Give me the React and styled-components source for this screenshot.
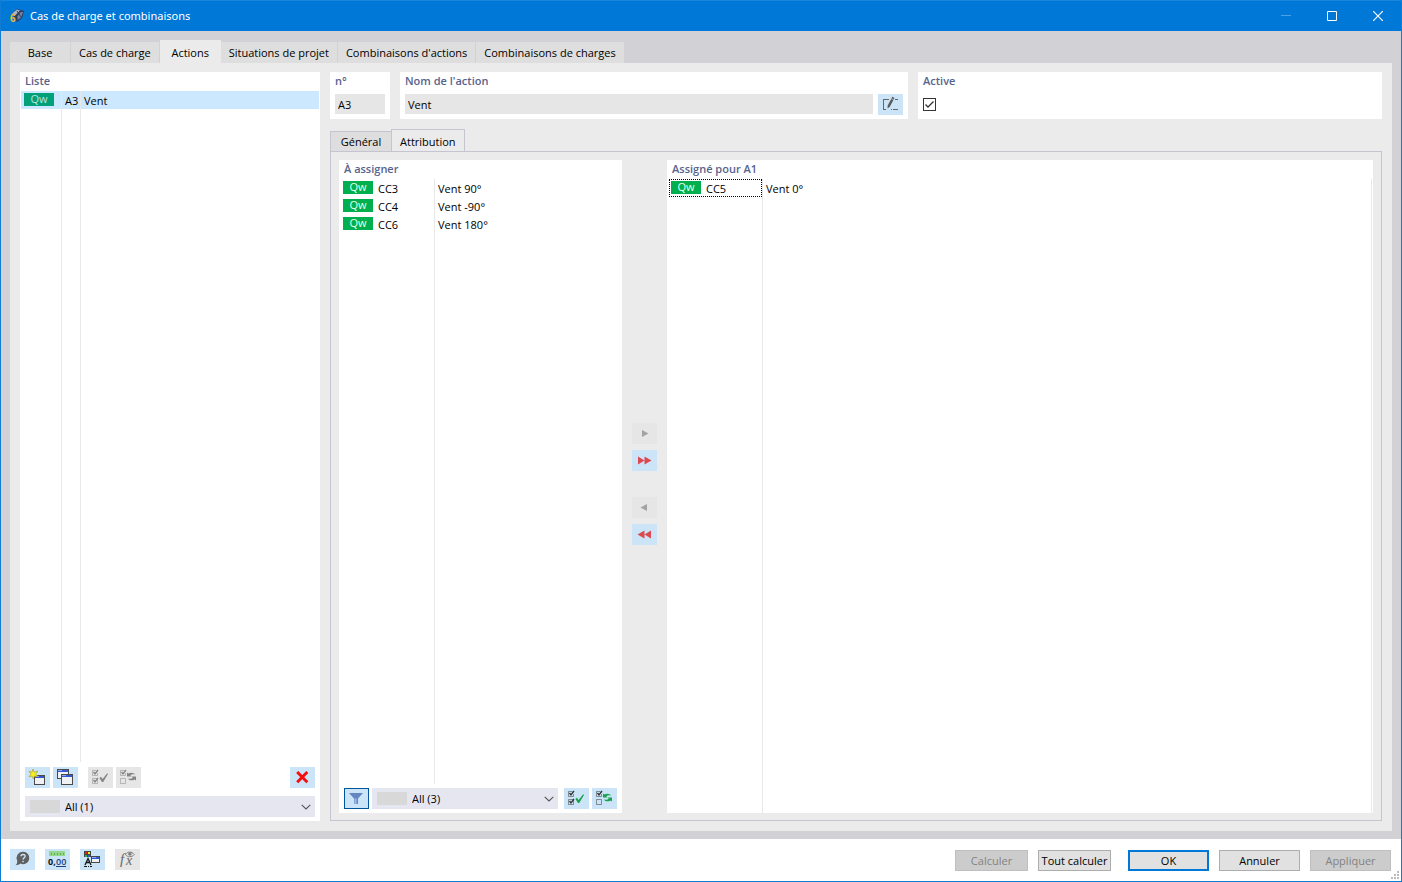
import React from 'react';
import styled, {createGlobalStyle} from 'styled-components';

const GlobalStyle = createGlobalStyle`
    * {
        box-sizing: border-box;
    }
    body {
        margin: 0;
        font-family: "Open Sans", "Noto Sans", sans-serif;
        font-size: 11px;
        line-height: 18px;
        color: #000;
    }
    button, input, select {
        font: inherit;
        color: inherit;
        margin: 0;
        border-radius: 0;
    }
`

const Window = styled.div`
    display: flex;
    flex-direction: column;
    min-height: 100vh;
    background-color: #d2d1d6;
    border: 1px solid #0f7dd3;
    border-top: 0;
`

const TitleBar = styled.header`
    display: flex;
    align-items: center;
    height: 31px;
    padding-left: 8px;
    gap: 6px;
    color: #fff;
    background-color: #0078d7;
    border-top: 1px solid #1a86db;
    h1 {
        flex: 1;
        margin: 0;
        font-family: "Noto Sans", sans-serif;
        font-size: 11px;
        font-weight: 400;
    }
`

const CaptionButton = styled.button`
    display: flex;
    align-items: center;
    justify-content: center;
    width: 40px;
    height: 30px;
    padding: 0;
    border: 0;
    background: none;
`

const CaptionButtons = styled.div`
    display: flex;
    gap: 6px;
    padding-right: 3px;
`

const Content = styled.main`
    flex: 1;
    display: flex;
    flex-direction: column;
    padding: 9px 9px 8px 9px;
`

const MainTabs = styled.nav`
    display: flex;
    align-items: flex-end;
    height: 23px;
`

const MainTab = styled.button`
    height: ${({$active}) => $active ? 23 : 21}px;
    min-width: 61px;
    padding: ${({$active}) => $active ? 2 : 0}px 8px 0 8px;
    border: 0;
    border-right: ${({$active}) => $active ? '0' : '1px solid #d2d1d6'};
    background-color: ${({$active}) => $active ? '#ebebeb' : '#dedede'};
    white-space: nowrap;
`

const MainPanel = styled.div`
    flex: 1;
    display: flex;
    gap: 10px;
    padding: 9px 10px 10px 10px;
    background-color: #ebebeb;
`

const Box = styled.section`
    display: flex;
    flex-direction: column;
    flex: ${({$flex}) => $flex || 'none'};
    min-width: 0;
    background-color: #fff;
`

const Title = styled.h2`
    height: 19px;
    margin: 0;
    padding-left: 5px;
    font-size: 11px;
    line-height: 17px;
    font-weight: 600;
    color: #57638e;
`

const RightColumn = styled.div`
    flex: 1;
    display: flex;
    flex-direction: column;
    min-width: 0;
`

const Fields = styled.div`
    display: flex;
    gap: 10px;
    height: 47px;
    margin-bottom: 10px;
`

const FieldRow = styled.div`
    display: flex;
    gap: 5px;
    padding: 3px 5px;
`

const TextField = styled.input`
    flex: 1;
    min-width: 0;
    height: 20px;
    padding: 0 3px;
    border: 0;
    background-color: #e6e6e6;
`

const CheckBox = styled.input`
    appearance: none;
    width: 13px;
    height: 13px;
    margin: 4px 0;
    border: 1px solid #333;
    background: #fff url("data:image/svg+xml,%3Csvg xmlns='http://www.w3.org/2000/svg' viewBox='0 0 11 11'%3E%3Cpath d='M1.5 5.5L4 8L9.5 2.5' fill='none' stroke='%23333' stroke-width='1.3'/%3E%3C/svg%3E");
`

const SubTabs = styled.nav`
    display: flex;
    align-items: flex-end;
    height: 23px;
    margin-bottom: -1px;
`

const SubTab = styled.button`
    height: ${({$active}) => $active ? 23 : 21}px;
    min-width: 61px;
    padding: ${({$active}) => $active ? 2 : 0}px 8px 0 8px;
    border: 1px solid #c5c4d0;
    border-right-width: ${({$active}) => $active ? 1 : 0}px;
    border-bottom-color: ${({$active}) => $active ? '#ebebeb' : '#c5c4d0'};
    background-color: ${({$active}) => $active ? '#ebebeb' : '#dedede'};
`

const AssignPanel = styled.div`
    flex: 1;
    display: grid;
    grid-template-columns: 283px 45px 1fr;
    padding: 8px 8px 7px 8px;
    border: 1px solid #c5c4d0;
`

const MoveButtons = styled.div`
    display: flex;
    flex-direction: column;
    align-items: center;
    justify-content: center;
    gap: 26px;
    padding-bottom: 5px;
`

const MovePair = styled.div`
    display: grid;
    gap: 6px;
`

const IconButton = styled.button`
    flex: none;
    width: 25px;
    height: 21px;
    padding: 0;
    border: 0;
    background-color: ${({disabled}) => disabled ? '#e6e6e6' : '#cce4f7'};
    outline: ${({$pressed}) => $pressed ? '1px solid #00559b' : 'none'};
    outline-offset: -1px;
    svg {
        display: block;
    }
`

const List = styled.table`
    flex: 1;
    width: ${({$inset}) => $inset ? 'calc(100% - 2px)' : '100%'};
    margin: ${({$inset}) => $inset ? '0 1px' : '0'};
    border-collapse: separate;
    border-spacing: 0;
    table-layout: fixed;
    td {
        padding: 2px 3px 0 3px;
        line-height: 16px;
        border-right: 1px solid #e8e8e8;
        white-space: nowrap;
    }
    td:last-child {
        padding-right: 0;
        border-right: 0;
    }
    td:empty {
        padding: 0;
    }
`

const Row = styled.tr`
    height: 18px;
    vertical-align: top;
    background-color: ${({$selected}) => $selected ? '#cce8ff' : 'transparent'};
`

const Badge = styled.span`
    flex: none;
    width: 30px;
    height: 13px;
    line-height: 12px;
    text-align: center;
    color: ${({$selected}) => $selected ? '#b8e4dd' : '#e8ffef'};
    background-color: ${({$selected}) => $selected ? '#00a079' : '#00b050'};
`

const Case = styled.span`
    display: flex;
    align-items: flex-start;
    gap: 5px;
    height: 18px;
    line-height: 20px;
    margin: -2px ${({$focused}) => $focused ? -3 : 0}px 0 ${({$focused}) => $focused ? -1 : 1}px;
    padding-left: ${({$focused}) => $focused ? 2 : 0}px;
    outline: ${({$focused}) => $focused ? '1px dotted #000' : 'none'};
    outline-offset: -1px;
    ${Badge} {
        margin-top: 2px;
    }
`

const Tools = styled.div`
    display: flex;
    gap: 3px;
    padding: ${({$top}) => $top || 5}px 5px 4px 5px;
`

const Spacer = styled.span`
    flex: ${({$width}) => $width === undefined ? '1' : `0 0 ${$width}px`};
`

const SelectFrame = styled.label`
    flex: 1;
    display: flex;
    align-items: center;
    height: 21px;
    padding-left: 5px;
    background-color: #e6e6f1;
    &::before {
        content: "";
        width: 30px;
        height: 13px;
        background-color: #d8d8d8;
    }
    select {
        flex: 1;
        min-width: 0;
        height: 21px;
        padding: 0 5px;
        border: 0;
        appearance: none;
        background: none;
    }
    svg {
        flex: none;
        margin-right: 4px;
        pointer-events: none;
    }
`

const Footer = styled.footer`
    position: relative;
    display: flex;
    align-items: center;
    justify-content: space-between;
    height: 42px;
    padding: 0 10px 0 9px;
    background-color: #fff;
`

const FooterGroup = styled.div`
    display: flex;
    gap: 10px;
    padding-bottom: ${({$raised}) => $raised ? 2 : 0}px;
`

const PushButton = styled.button`
    width: ${({$narrow}) => $narrow ? 73 : 81}px;
    height: 21px;
    margin-left: ${({$primary}) => $primary ? 7 : 0}px;
    padding: 0;
    line-height: 17px;
    white-space: nowrap;
    color: ${({disabled}) => disabled ? '#838383' : '#000'};
    background-color: ${({disabled}) => disabled ? '#cccccc' : '#e1e1e1'};
    border: ${({$primary, disabled}) => $primary ? '2px solid #0078d7' : `1px solid ${disabled ? '#bfbfbf' : '#adadad'}`};
`

const Grip = styled.svg`
    position: absolute;
    right: 2px;
    bottom: 2px;
`

const Icon = ({children}) => (
    <svg width="25" height="21" viewBox="0 0 25 21" fill="none" aria-hidden="true">{children}</svg>
)

const MiniWindow = ({x, y, w = 11, h = 10}) => (
    <g shapeRendering="crispEdges">
        <rect x={x} y={y} width={w} height={h} fill="#4a4a4a"/>
        <rect x={x + 1} y={y + 1} width={w - 2} height="2" fill="#3157d5"/>
        <rect x={x + 1} y={y + 1} width="4" height="1" fill="#8ea6ee"/>
        <rect x={x + 1} y={y + 3} width={w - 2} height={h - 4} fill="#f1f1f4"/>
    </g>
)

const NewIcon = () => (
    <Icon>
        <MiniWindow x={9} y={8}/>
        <path d="M8 2L9.2 5.2L13 4L10.7 7L13 9.5L9.6 9L8.3 12L7 9L4 10L6 7L4 4.4L7 5.2Z" fill="#f6ef20" stroke="#a39b22" strokeWidth=".6"/>
    </Icon>
)

const CopyIcon = () => (
    <Icon>
        <MiniWindow x={4} y={2} w={12}/>
        <MiniWindow x={8} y={7} w={12} h={11}/>
    </Icon>
)

const Ticks = ({color, second}) => (
    <g stroke={color}>
        <path d="M8.5 3.5H4.5V8.5H9.5V6M4.5 11.5H9.5V16.5H4.5Z" strokeWidth="1" opacity=".5"/>
        <path d="M5.5 5L7 7L10 3" strokeWidth="1.3"/>
        {second && <path d="M5.5 13L7 15L10 11" strokeWidth="1.3"/>}
    </g>
)

const CheckAllIcon = ({color, dark}) => (
    <Icon>
        <Ticks color={dark} second/>
        <path d="M11.4 11L13 9.8L14.6 12L19.2 6.2L20 7L15.2 15H14Z" fill={color}/>
    </Icon>
)

const InvertIcon = ({color, dark}) => (
    <Icon>
        <Ticks color={dark}/>
        <path d="M11 9.5V5.4L12.5 6.6C14.5 5 17.6 5.4 19.4 7.6C16.8 6.9 15.6 7.3 14.4 8.2L15.4 9.5Z" fill={color}/>
        <path d="M20 9.5V13.6L18.5 12.4C16.4 14 13.6 13.6 11.6 11.4C14 12.1 15.6 11.8 16.8 10.8L15.6 9.5Z" fill={color}/>
    </Icon>
)

const DeleteIcon = () => (
    <Icon><path d="M7.2 5L17.3 15.3M17.3 5L7.2 15.3" stroke="#f50d0d" strokeWidth="2.9"/></Icon>
)

const FilterIcon = () => (
    <Icon>
        <path d="M5 5H19L14 10.5V16H10V10.5Z" fill="#6487c4"/>
        <path d="M10.5 10.5H12.5V16H10.5Z" fill="#a0bbe6"/>
    </Icon>
)

const EditIcon = () => (
    <Icon>
        <path d="M11 5.5H5.5V15.5H8M13 15.5H14M15 15.5H20M17 5.5H20" stroke="#666" shapeRendering="crispEdges"/>
        <path d="M14.3 2.8L16.5 4L11.8 12.7L9.6 14.5L9.6 11.7Z" fill="#5b5b5b"/>
        <path d="M13.2 4.5L15.7 6" stroke="#cce4f7" strokeWidth=".7"/>
    </Icon>
)

const MoveIcon = ({left, double, color}) => (
    <Icon>
        <g transform={left ? 'translate(25 0) scale(-1 1)' : undefined} fill={color}>
            {double
                ? <path d="M6 6.5L12.5 10.5L6 14.5ZM12.5 6.5L19.5 10.5L12.5 14.5Z"/>
                : <path d="M10 7L16.5 10.5L10 14Z"/>}
        </g>
    </Icon>
)

const HelpIcon = () => (
    <Icon>
        <path d="M13 2.8A6.2 6.2 0 1 1 10.5 14.6C9 15.8 7.5 16.2 5.6 16.2C7 15 7.3 13.8 7.3 12A6.2 6.2 0 0 1 13 2.8Z" fill="#606060"/>
        <path d="M11 7.3C11 4.8 15.3 4.8 15.1 7.3C15 8.9 13.1 8.7 13.1 10.6M13.1 11.8V13.3" stroke="#cce4f7" strokeWidth="1.4"/>
    </Icon>
)

const DecimalsIcon = () => (
    <Icon>
        <rect x="4" y="2" width="16" height="5" fill="#94d88a"/>
        <path d="M6.5 4V6M9.5 4V6M12.5 4V6M15.5 4V6M18.5 4V6" stroke="#5fae58" shapeRendering="crispEdges"/>
        <text x="3" y="16" fontSize="9" fontWeight="700" fill="#111">0,</text>
        <text x="11" y="16" fontSize="9" fontWeight="600" fill="#203d7c">00</text>
        <path d="M11 17.5H21" stroke="#203d7c" shapeRendering="crispEdges"/>
    </Icon>
)

const DisplayIcon = () => (
    <Icon>
        <g shapeRendering="crispEdges">
            <rect x="4" y="2" width="7" height="6" fill="#444"/>
            <rect x="5" y="3" width="2" height="2" fill="#e8211c"/>
            <rect x="8" y="3" width="2" height="2" fill="#f4e61f"/>
            <rect x="5" y="6" width="2" height="2" fill="#23b43b"/>
            <rect x="8" y="6" width="2" height="2" fill="#2c55df"/>
        </g>
        <MiniWindow x={11} y={7} w={9} h={7}/>
        <path d="M5 16L8 9.5L11 16M6 13.5H10" stroke="#151515" strokeWidth="1.3"/>
        <path d="M4 17.5H7M8 17.5H9M10 17.5H12" stroke="#151515" shapeRendering="crispEdges"/>
    </Icon>
)

const FormulaIcon = () => (
    <Icon>
        <text x="5" y="15" fontSize="15" fontFamily="Liberation Serif, serif" fontStyle="italic" fill="#666">f</text>
        <text x="11" y="16" fontSize="14" fontFamily="Liberation Serif, serif" fontStyle="italic" fill="#666">x</text>
        <path d="M10.5 5.5C12.5 2.3 17 2.3 19.2 5.5C17 8.5 12.5 8.5 10.5 5.5Z" stroke="#808080"/>
        <circle cx="14.9" cy="5" r="1.8" fill="#808080"/>
    </Icon>
)

const AppIcon = () => (
    <svg width="15" height="16" viewBox="0 0 15 16" aria-hidden="true">
        <path d="M3 5L8 1L15 3L13 10L8 14L5 9Z" fill="#2f3d57"/>
        <path d="M3 5.5L8 1.6L11 2.6L6 7.5Z" fill="#a9b5c9"/>
        <path d="M11.5 4L14 4L12 9.5L8.5 12V8Z" fill="#7386a5"/>
        <path d="M8 3L12 9M12 3L7 9" stroke="#2f3d57"/>
        <text x="1" y="14" fontSize="10" fontFamily="Liberation Sans, sans-serif" fontWeight="700" fill="#f2bd2b">6</text>
    </svg>
)

const FilterSelect = ({label, count}) => (
    <SelectFrame>
        <select aria-label={label}>
            <option>{`All (${count})`}</option>
        </select>
        <svg width="10" height="6" viewBox="0 0 10 6" aria-hidden="true">
            <path d="M.7 .8L5 5L9.3 .8" fill="none" stroke="#555" strokeWidth="1.1"/>
        </svg>
    </SelectFrame>
)

const CaseList = ({items, focused}) => (
    <List>
        <colgroup>
            <col style={{width: 96}}/>
            <col/>
            {focused && <col style={{width: 1}}/>}
        </colgroup>
        <tbody>
            {
                items.map(({id, name}) => (
                    <Row key={id}>
                        <td><Case $focused={focused === id}><Badge>Qw</Badge>{id}</Case></td>
                        <td>{name}</td>
                        {focused && <td/>}
                    </Row>
                ))
            }
            <tr><td/><td/>{focused && <td/>}</tr>
        </tbody>
    </List>
)

const tabs = [
    'Base',
    'Cas de charge',
    'Actions',
    'Situations de projet',
    "Combinaisons d'actions",
    'Combinaisons de charges'
]

const available = [
    {id: 'CC3', name: 'Vent 90°'},
    {id: 'CC4', name: 'Vent -90°'},
    {id: 'CC6', name: 'Vent 180°'}
]

const assigned = [
    {id: 'CC5', name: 'Vent 0°'}
]

const ActionList = () => (
    <Box $flex="0 0 300px">
        <Title>Liste</Title>
        <List $inset>
            <colgroup>
                <col style={{width: 41}}/>
                <col style={{width: 19}}/>
                <col/>
            </colgroup>
            <tbody>
                <Row $selected>
                    <td><Badge as="div" $selected>Qw</Badge></td>
                    <td>A3</td>
                    <td>Vent</td>
                </Row>
                <tr><td/><td/><td/></tr>
            </tbody>
        </List>
        <Tools>
            <IconButton aria-label="Nouveau"><NewIcon/></IconButton>
            <IconButton aria-label="Copier"><CopyIcon/></IconButton>
            <Spacer $width={4}/>
            <IconButton aria-label="Tout sélectionner" disabled><CheckAllIcon color="#858585" dark="#858585"/></IconButton>
            <IconButton aria-label="Inverser la sélection" disabled><InvertIcon color="#858585" dark="#858585"/></IconButton>
            <Spacer/>
            <IconButton aria-label="Supprimer"><DeleteIcon/></IconButton>
        </Tools>
        <Tools $top={4}>
            <FilterSelect label="Filtre de la liste" count={1}/>
        </Tools>
    </Box>
)

const ActionFields = () => (
    <Fields>
        <Box $flex="0 0 60px">
            <Title as="label" htmlFor="number">n°</Title>
            <FieldRow><TextField id="number" defaultValue="A3" readOnly/></FieldRow>
        </Box>
        <Box $flex="508 1 0">
            <Title as="label" htmlFor="name">Nom de l'action</Title>
            <FieldRow>
                <TextField id="name" defaultValue="Vent" readOnly/>
                <IconButton aria-label="Modifier le nom"><EditIcon/></IconButton>
            </FieldRow>
        </Box>
        <Box $flex="464 1 0">
            <Title as="label" htmlFor="active">Active</Title>
            <FieldRow><CheckBox id="active" type="checkbox" defaultChecked/></FieldRow>
        </Box>
    </Fields>
)

const Assignment = () => (
    <AssignPanel>
        <Box>
            <Title>À assigner</Title>
            <CaseList items={available}/>
            <Tools $top={4}>
                <IconButton aria-label="Filtrer" $pressed><FilterIcon/></IconButton>
                <FilterSelect label="Filtre des cas de charge" count={3}/>
                <Spacer $width={0}/>
                <IconButton aria-label="Tout sélectionner"><CheckAllIcon color="#16a34a" dark="#333"/></IconButton>
                <IconButton aria-label="Inverser la sélection"><InvertIcon color="#16a34a" dark="#333"/></IconButton>
            </Tools>
        </Box>
        <MoveButtons>
            <MovePair>
                <IconButton aria-label="Assigner" disabled><MoveIcon color="#a3a3a3"/></IconButton>
                <IconButton aria-label="Tout assigner"><MoveIcon double color="#dc4a50"/></IconButton>
            </MovePair>
            <MovePair>
                <IconButton aria-label="Retirer" disabled><MoveIcon left color="#a3a3a3"/></IconButton>
                <IconButton aria-label="Tout retirer"><MoveIcon left double color="#dc4a50"/></IconButton>
            </MovePair>
        </MoveButtons>
        <Box>
            <Title>Assigné pour A1</Title>
            <CaseList items={assigned} focused="CC5"/>
        </Box>
    </AssignPanel>
)

export default function App() {
    return (
        <Window>
            <GlobalStyle/>
            <TitleBar>
                <AppIcon/>
                <h1>Cas de charge et combinaisons</h1>
                <CaptionButtons>
                    <CaptionButton aria-label="Réduire" disabled>
                        <svg width="10" height="10"><path d="M0 4.5H10" stroke="#4da1e3"/></svg>
                    </CaptionButton>
                    <CaptionButton aria-label="Agrandir">
                        <svg width="10" height="10"><path d="M.5 .5H9.5V9.5H.5Z" fill="none" stroke="#fff"/></svg>
                    </CaptionButton>
                    <CaptionButton aria-label="Fermer">
                        <svg width="10" height="10"><path d="M0 0L10 10M10 0L0 10" stroke="#fff" strokeWidth="1.2"/></svg>
                    </CaptionButton>
                </CaptionButtons>
            </TitleBar>
            <Content>
                <MainTabs>
                    {
                        tabs.map(tab => (
                            <MainTab key={tab} $active={tab === 'Actions'}>{tab}</MainTab>
                        ))
                    }
                </MainTabs>
                <MainPanel>
                    <ActionList/>
                    <RightColumn>
                        <ActionFields/>
                        <SubTabs>
                            <SubTab>Général</SubTab>
                            <SubTab $active>Attribution</SubTab>
                        </SubTabs>
                        <Assignment/>
                    </RightColumn>
                </MainPanel>
            </Content>
            <Footer>
                <FooterGroup $raised>
                    <IconButton aria-label="Aide"><HelpIcon/></IconButton>
                    <IconButton aria-label="Unités et décimales"><DecimalsIcon/></IconButton>
                    <IconButton aria-label="Affichage"><DisplayIcon/></IconButton>
                    <IconButton aria-label="Formule" disabled><FormulaIcon/></IconButton>
                </FooterGroup>
                <FooterGroup>
                    <PushButton $narrow disabled>Calculer</PushButton>
                    <PushButton $narrow>Tout calculer</PushButton>
                    <PushButton $primary>OK</PushButton>
                    <PushButton>Annuler</PushButton>
                    <PushButton disabled>Appliquer</PushButton>
                </FooterGroup>
                <Grip width="8" height="8" fill="#bdbdbd" shapeRendering="crispEdges" aria-hidden="true">
                    <path d="M6 0h2v2h-2zM3 3h2v2h-2zM6 3h2v2h-2zM0 6h2v2h-2zM3 6h2v2h-2zM6 6h2v2h-2z"/>
                </Grip>
            </Footer>
        </Window>
    );
}
